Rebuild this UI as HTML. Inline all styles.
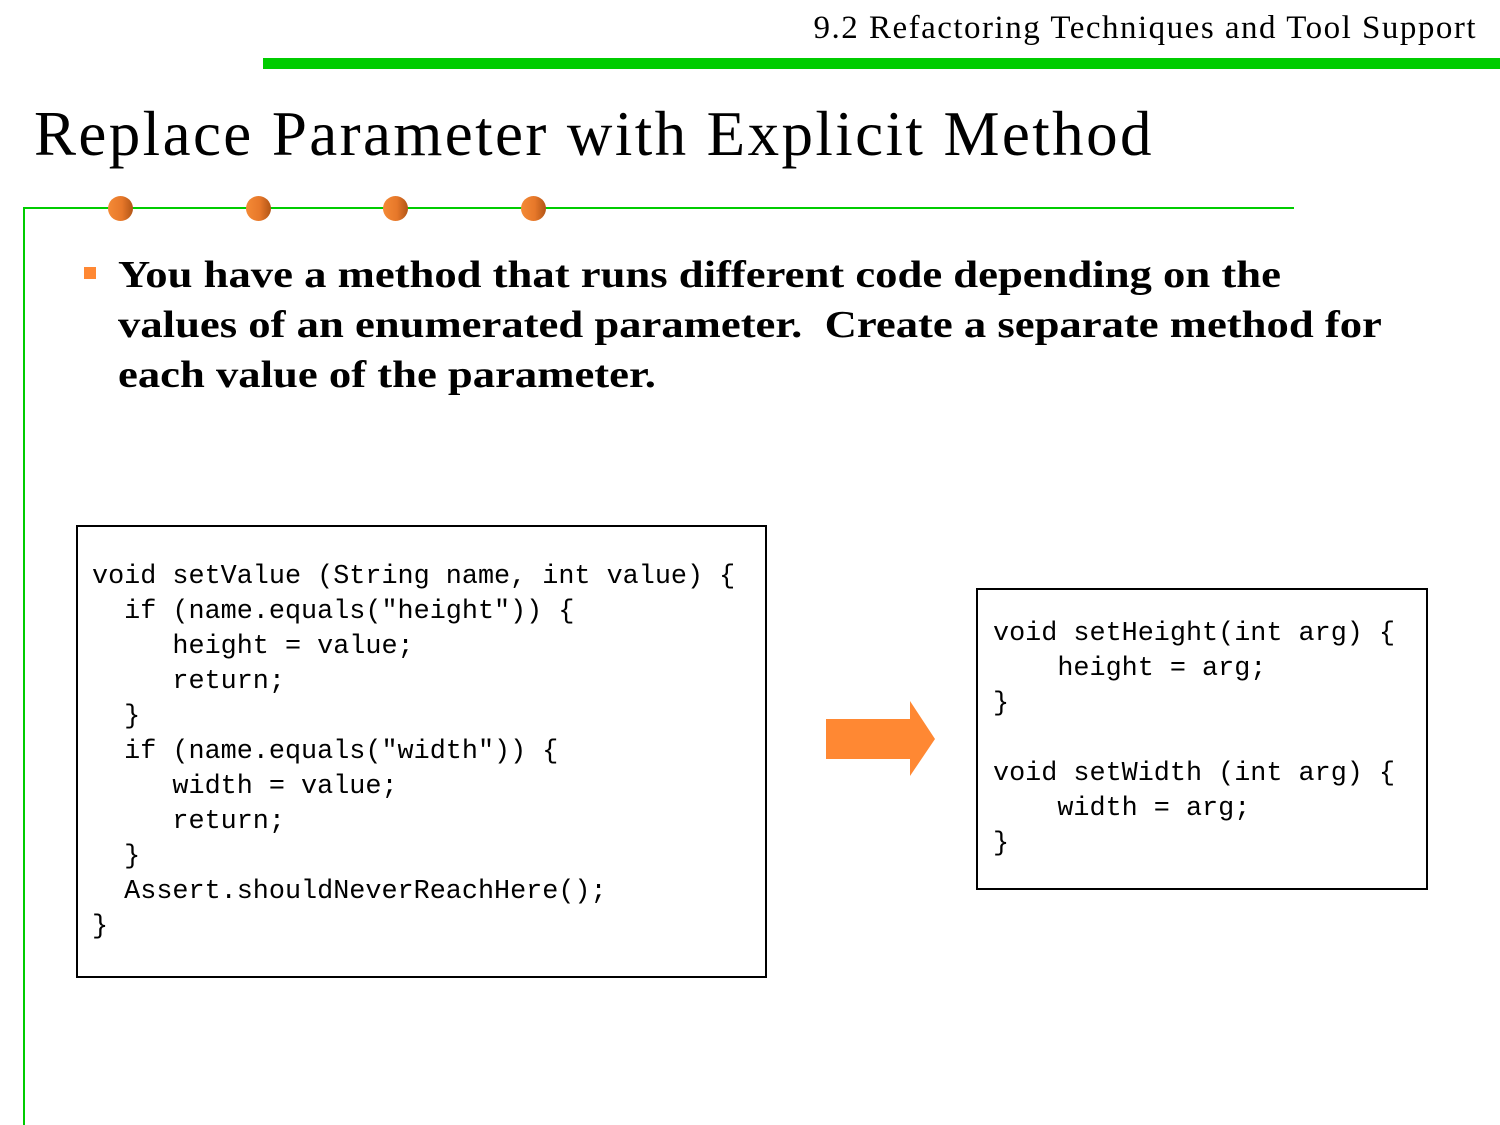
<!DOCTYPE html>
<html><head><style>
html,body{margin:0;padding:0;background:#fff;}
body{width:1500px;height:1125px;position:relative;overflow:hidden;font-family:"Liberation Serif",serif;}
.abs{position:absolute;}
.hdr{right:23px;top:10px;font-size:33px;color:#000;white-space:nowrap;letter-spacing:1.5px;}
.title{left:34px;top:98px;font-size:63px;white-space:nowrap;letter-spacing:2.4px;}
.bul{left:118px;top:250px;font-size:38.5px;font-weight:bold;line-height:50px;white-space:nowrap;transform:scaleX(1.16);transform-origin:0 0;}
.code{font-family:"Liberation Mono",monospace;font-size:26.8px;line-height:35px;white-space:pre;margin:0;}
.box{border:2px solid #000;}
.dot{width:25px;height:25px;border-radius:50%;background:linear-gradient(90deg,#f48a36,#e7782a 55%,#b25516);top:196px;}
</style></head><body>
<div class="abs hdr">9.2 Refactoring Techniques and Tool Support</div>
<div class="abs" style="left:263px;top:58px;width:1237px;height:11px;background:#00cc00"></div>
<div class="abs title">Replace Parameter with Explicit Method</div>
<div class="abs" style="left:23px;top:207px;width:1271px;height:2px;background:#00cc00"></div>
<div class="abs" style="left:23px;top:207px;width:2px;height:918px;background:#00cc00"></div>
<div class="abs dot" style="left:108px"></div>
<div class="abs dot" style="left:246px"></div>
<div class="abs dot" style="left:383px"></div>
<div class="abs dot" style="left:521px"></div>
<div class="abs" style="left:84px;top:267px;width:12px;height:12px;background:#ff8833"></div>
<div class="abs bul">You have a method that runs different code depending on the<br>values of an enumerated parameter.&nbsp; Create a separate method for<br>each value of the parameter.</div>
<div class="abs box" style="left:76px;top:525px;width:687px;height:449px"></div>
<pre class="abs code" style="left:92px;top:560px">void setValue (String name, int value) {
  if (name.equals("height")) {
     height = value;
     return;
  }
  if (name.equals("width")) {
     width = value;
     return;
  }
  Assert.shouldNeverReachHere();
}</pre>
<svg class="abs" style="left:0;top:0" width="1500" height="1125"><polygon points="826,719 910,719 910,701 935,739 910,776 910,759 826,759" fill="#ff8833"/></svg>
<div class="abs box" style="left:976px;top:588px;width:448px;height:298px"></div>
<pre class="abs code" style="left:993px;top:617px">void setHeight(int arg) {
    height = arg;
}

void setWidth (int arg) {
    width = arg;
}</pre>
</body></html>
